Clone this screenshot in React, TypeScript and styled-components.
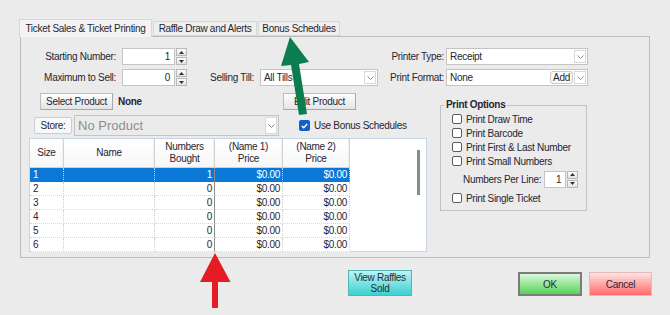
import React from 'react';
import styled, {createGlobalStyle} from 'styled-components';

const GlobalStyle = createGlobalStyle`
  * { box-sizing: border-box; }
  html, body { margin: 0; padding: 0; background: #ebebeb; }
  body {
    font-family: "Liberation Sans", Arial, sans-serif;
    font-size: 10px;
    letter-spacing: -0.3px;
    color: #262633;
  }
`

const ROWS = [
  {size: '1', bought: '1', p1: '$0.00', p2: '$0.00'},
  {size: '2', bought: '0', p1: '$0.00', p2: '$0.00'},
  {size: '3', bought: '0', p1: '$0.00', p2: '$0.00'},
  {size: '4', bought: '0', p1: '$0.00', p2: '$0.00'},
  {size: '5', bought: '0', p1: '$0.00', p2: '$0.00'},
  {size: '6', bought: '0', p1: '$0.00', p2: '$0.00'},
]

const OPTIONS_TOP = ['Print Draw Time', 'Print Barcode', 'Print First & Last Number', 'Print Small Numbers']

const Chevron = () => (
  <svg width="7" height="4" viewBox="0 0 7 4">
    <polyline points="0.5,0.5 3.5,3.5 6.5,0.5" fill="none" stroke="#8a8a8a" strokeWidth="1"/>
  </svg>
)

const Tri = ({down}: {down?: boolean}) => (
  <svg width="5" height="3" viewBox="0 0 5 3">
    <polygon points={down ? '0,0 5,0 2.5,3' : '0,3 5,3 2.5,0'} fill="#333"/>
  </svg>
)

const Spinner = ({value, width}: {value: string; width: number}) => (
  <SpinBox $w={width}>
    <SpinInput>{value}</SpinInput>
    <SpinButtons>
      <SpinButton><Tri/></SpinButton>
      <SpinButton><Tri down/></SpinButton>
    </SpinButtons>
  </SpinBox>
)

const Select = ({text, width, height = 17, disabled, add}: {
  text: string; width: number; height?: number; disabled?: boolean; add?: boolean
}) => (
  <SelectBox $w={width} $h={height} $disabled={disabled}>
    <SelectText $big={disabled}>{text}</SelectText>
    {add && <AddButton>Add</AddButton>}
    <ArrowBox><Chevron/></ArrowBox>
  </SelectBox>
)

export default function App() {
  return (
    <Screen>
      <GlobalStyle/>
      <TabBar>
        <Tab $w={133} $active>Ticket Sales &amp; Ticket Printing</Tab>
        <Tab $w={104}>Raffle Draw and Alerts</Tab>
        <Tab $w={82}>Bonus Schedules</Tab>
      </TabBar>

      <Panel>
        <TopGrid>
          <FieldLabel $pr={6}>Starting Number:</FieldLabel>
          <Spinner value="1" width={65}/>
          <div/>
          <div/>
          <FieldLabel $pr={2}>Printer Type:</FieldLabel>
          <Select text="Receipt" width={142}/>

          <FieldLabel $pr={6}>Maximum to Sell:</FieldLabel>
          <Spinner value="0" width={65}/>
          <FieldLabel $pr={6}>Selling Till:</FieldLabel>
          <Select text="All Tills" width={118}/>
          <FieldLabel $pr={2}>Print Format:</FieldLabel>
          <Select text="None" width={142} add/>
        </TopGrid>

        <MainRow>
          <LeftCol>
            <ProductRow>
              <PlainButton $w={73}>Select Product</PlainButton>
              <ProductName>None</ProductName>
              <EditButton $w={73}>Edit Product</EditButton>
            </ProductRow>

            <StoreRow>
              <StoreButton>Store:</StoreButton>
              <Select text="No Product" width={205} height={21} disabled/>
              <BonusCheck>
                <BlueBox>
                  <svg width="7" height="6" viewBox="0 0 7 6">
                    <polyline points="0.8,3 2.7,4.8 6.2,1" fill="none" stroke="#fff" strokeWidth="1.4"/>
                  </svg>
                </BlueBox>
                Use Bonus Schedules
              </BonusCheck>
            </StoreRow>

            <TableBox>
              <TableGrid>
                <HeadCell>Size</HeadCell>
                <HeadCell>Name</HeadCell>
                <HeadCell>Numbers<br/>Bought</HeadCell>
                <HeadCell>(Name 1)<br/>Price</HeadCell>
                <HeadCell>(Name 2)<br/>Price</HeadCell>
                {ROWS.map((r, i) => (
                  <React.Fragment key={r.size}>
                    <BodyCell $sel={i === 0}>{r.size}</BodyCell>
                    <BodyCell $sel={i === 0}/>
                    <BodyCell $sel={i === 0} $right $strong>{r.bought}</BodyCell>
                    <BodyCell $sel={i === 0} $right>{r.p1}</BodyCell>
                    <BodyCell $sel={i === 0} $right>{r.p2}</BodyCell>
                  </React.Fragment>
                ))}
              </TableGrid>
              <TableFiller>
                <ScrollThumb/>
              </TableFiller>
            </TableBox>
          </LeftCol>

          <OptionsGroup>
            <OptionsLegend>Print Options</OptionsLegend>
            {OPTIONS_TOP.map((o) => (
              <OptionRow key={o}><Box/>{o}</OptionRow>
            ))}
            <PerLineRow>
              Numbers Per Line:
              <Spinner value="1" width={34}/>
            </PerLineRow>
            <OptionRow $mt={3}><Box/>Print Single Ticket</OptionRow>
          </OptionsGroup>
        </MainRow>
      </Panel>

      <Footer>
        <ViewButton>View Raffles<br/>Sold</ViewButton>
        <ActionButton $variant="ok">OK</ActionButton>
        <ActionButton $variant="cancel">Cancel</ActionButton>
      </Footer>

      <Arrows width="670" height="315" viewBox="0 0 670 315">
        <polygon
          points="290,37 309,62 299,64 307,114 299,115 291,65 281,66"
          fill="#0b7d4e"/>
        <polygon
          points="215,253 230.5,282 218,282 218,308 212,308 212,282 200,282"
          fill="#e61c24"/>
      </Arrows>
    </Screen>
  );
}

const Screen = styled.div`
  position: relative;
  width: 670px;
  height: 315px;
  overflow: hidden;
  padding: 19px 20px 0 19px;
  background: #ebebeb;
`

const TabBar = styled.div`
  display: flex;
  align-items: flex-end;
  gap: 1px;
  height: 17px;
`

const Tab = styled.div<{ $w: number; $active?: boolean }>`
  position: relative;
  z-index: ${p => p.$active ? 1 : 0};
  width: ${p => p.$w}px;
  height: ${p => p.$active ? 18 : 15}px;
  margin-bottom: ${p => p.$active ? -1 : 0}px;
  display: flex;
  align-items: center;
  justify-content: center;
  background: ${p => p.$active ? '#f3f3f3' : '#efefef'};
  border: 1px solid #d6d6d6;
  border-bottom: ${p => p.$active ? 'none' : '1px solid #d6d6d6'};
  white-space: nowrap;
`

const Panel = styled.div`
  margin-left: 1px;
  width: 630px;
  height: 222px;
  border: 1px solid #bdbdbd;
  padding-top: 11px;
`

const TopGrid = styled.div`
  display: grid;
  grid-template-columns: 101px 65px 73px 118px 68px 142px;
  grid-template-rows: 17px 17px;
  row-gap: 4px;
`

const FieldLabel = styled.div<{ $pr: number }>`
  display: flex;
  align-items: center;
  justify-content: flex-end;
  padding-right: ${p => p.$pr}px;
  white-space: nowrap;
`

const SpinBox = styled.div<{ $w: number }>`
  display: flex;
  width: ${p => p.$w}px;
  height: 17px;
`

const SpinInput = styled.div`
  flex: 1;
  background: #fff;
  border: 1px solid #c4c4c4;
  text-align: right;
  padding-right: 4px;
  line-height: 15px;
`

const SpinButtons = styled.div`
  width: 11px;
  margin-left: 1px;
  display: flex;
  flex-direction: column;
  gap: 1px;
`

const SpinButton = styled.div`
  flex: 1;
  display: flex;
  align-items: center;
  justify-content: center;
  border: 1px solid #b8b8b8;
  background: linear-gradient(#fdfdfd, #e2e2e2);
`

const SelectBox = styled.div<{ $w: number; $h: number; $disabled?: boolean }>`
  display: flex;
  align-items: stretch;
  width: ${p => p.$w}px;
  height: ${p => p.$h}px;
  padding: 1px 1px 1px 3px;
  background: ${p => p.$disabled ? '#ebebeb' : '#fff'};
  border: 1px solid #c4c4c4;
`

const SelectText = styled.span<{ $big?: boolean }>`
  flex: 1;
  display: flex;
  align-items: center;
  font-size: ${p => p.$big ? 13 : 10}px;
  letter-spacing: ${p => p.$big ? 0 : -0.3}px;
  color: ${p => p.$big ? '#8f8f8f' : '#262633'};
  white-space: nowrap;
`

const AddButton = styled.span`
  display: flex;
  align-items: center;
  padding: 0 2px;
  margin-right: 1px;
  border: 1px solid #c8c8c8;
  border-radius: 3px;
  background: #fafafa;
`

const ArrowBox = styled.span`
  width: 12px;
  display: flex;
  align-items: center;
  justify-content: center;
  border: 1px solid #d8d8d8;
  background: #fff;
`

const MainRow = styled.div`
  display: flex;
  align-items: flex-start;
  margin-top: 7px;
`

const LeftCol = styled.div`
  width: 406px;
  display: flex;
  flex-direction: column;
`

const ProductRow = styled.div`
  display: flex;
  align-items: center;
  height: 17px;
  padding-left: 19px;
`

const PlainButton = styled.div<{ $w: number }>`
  width: ${p => p.$w}px;
  height: 17px;
  display: flex;
  align-items: center;
  justify-content: center;
  background: linear-gradient(#fdfdfd, #e4e4e4);
  border: 1px solid #bcbcbc;
  border-right-color: #a8a8a8;
  border-bottom-color: #a8a8a8;
  white-space: nowrap;
`

const EditButton = styled(PlainButton)`
  margin-left: auto;
  margin-right: 71px;
`

const ProductName = styled.span`
  margin-left: 5px;
  font-weight: bold;
`

const StoreRow = styled.div`
  display: flex;
  align-items: center;
  height: 21px;
  margin-top: 5px;
  padding-left: 13px;
`

const StoreButton = styled.div`
  width: 38px;
  height: 17px;
  margin-right: 2px;
  display: flex;
  align-items: center;
  justify-content: center;
  background: #f8f8f8;
  border: 1px solid #cdcdcd;
  border-radius: 2px;
`

const BonusCheck = styled.div`
  display: flex;
  align-items: center;
  gap: 4px;
  margin-left: 20px;
  white-space: nowrap;
`

const BlueBox = styled.span`
  width: 11px;
  height: 11px;
  display: flex;
  align-items: center;
  justify-content: center;
  border-radius: 2px;
  background: #1461c4;
`

const TableBox = styled.div`
  display: flex;
  margin: 2px 0 0 8px;
  width: 398px;
  height: 114px;
  background: #fff;
  border: 1px solid #c6d4e3;
`

const TableGrid = styled.div`
  display: grid;
  grid-template-columns: 34px 91px 60px 68px 67px;
  grid-template-rows: 29px repeat(6, 14px);
  align-content: start;
`

const HeadCell = styled.div`
  display: flex;
  align-items: center;
  justify-content: center;
  text-align: center;
  line-height: 12px;
  background: linear-gradient(#ffffff, #f7f7f7);
  border-right: 1px solid #d2d2d2;
  border-bottom: 1px solid #d2d2d2;
  box-shadow: inset -1px 0 0 #f0f0f0;
`

const BodyCell = styled.div<{ $sel?: boolean; $right?: boolean; $strong?: boolean }>`
  padding: 0 2px 0 3px;
  line-height: 13px;
  text-align: ${p => p.$right ? 'right' : 'left'};
  background: ${p => p.$sel ? '#0a78d6' : '#fff'};
  color: ${p => p.$sel ? '#fff' : '#262633'};
  border-bottom: 1px dotted ${p => p.$sel ? '#0a78d6' : '#d6d6d6'};
  border-right: 1px ${p => p.$strong ? 'solid #8c8c8c' : 'dotted #cfcfcf'};
`

const TableFiller = styled.div`
  flex: 1;
  display: flex;
  justify-content: flex-end;
  padding: 11px 6px 0 0;
`

const ScrollThumb = styled.div`
  width: 3px;
  height: 45px;
  background: #8a8a8a;
`

const OptionsGroup = styled.fieldset`
  margin: 6px 0 0 13px;
  width: 147px;
  height: 112px;
  min-width: 0;
  padding: 1px 0 0 11px;
  border: 1px solid #c2c2c2;
  display: flex;
  flex-direction: column;
`

const OptionsLegend = styled.legend`
  margin-left: -8px;
  padding: 0 2px;
  font-weight: bold;
  line-height: 12px;
`

const OptionRow = styled.div<{ $mt?: number }>`
  display: flex;
  align-items: center;
  gap: 4px;
  height: 14px;
  margin-top: ${p => p.$mt ?? 0}px;
  white-space: nowrap;
`

const Box = styled.span`
  width: 10px;
  height: 10px;
  border: 1px solid #5c5c5c;
  border-radius: 2px;
  background: #fff;
`

const PerLineRow = styled.div`
  display: flex;
  align-items: center;
  gap: 3px;
  height: 18px;
  margin-top: 2px;
  padding-left: 11px;
  white-space: nowrap;
`

const Footer = styled.div`
  display: flex;
  align-items: flex-start;
  margin: 12px -2px 0 1px;
  padding-left: 328px;
`

const ViewButton = styled.div`
  width: 64px;
  height: 26px;
  display: flex;
  align-items: center;
  justify-content: center;
  text-align: center;
  line-height: 11px;
  color: #2a2a3a;
  background: linear-gradient(#b8f5f5, #3dd0d0);
  border: 1px solid #56b4b4;
`

const ActionButton = styled.div<{ $variant: 'ok' | 'cancel' }>`
  margin-top: 2px;
  margin-left: ${p => p.$variant === 'ok' ? 'auto' : '7px'};
  width: ${p => p.$variant === 'ok' ? 64 : 63}px;
  height: 24px;
  display: flex;
  align-items: center;
  justify-content: center;
  color: #2a2a3a;
  background: ${p => p.$variant === 'ok'
    ? 'linear-gradient(#dcf8dc, #55d455)'
    : 'linear-gradient(#ffe2e2, #ff6a6a)'};
  border: ${p => p.$variant === 'ok' ? '2px solid #7c7c7c' : '1px solid #e6b8b8'};
`

const Arrows = styled.svg`
  position: absolute;
  left: 0;
  top: 0;
  pointer-events: none;
`
